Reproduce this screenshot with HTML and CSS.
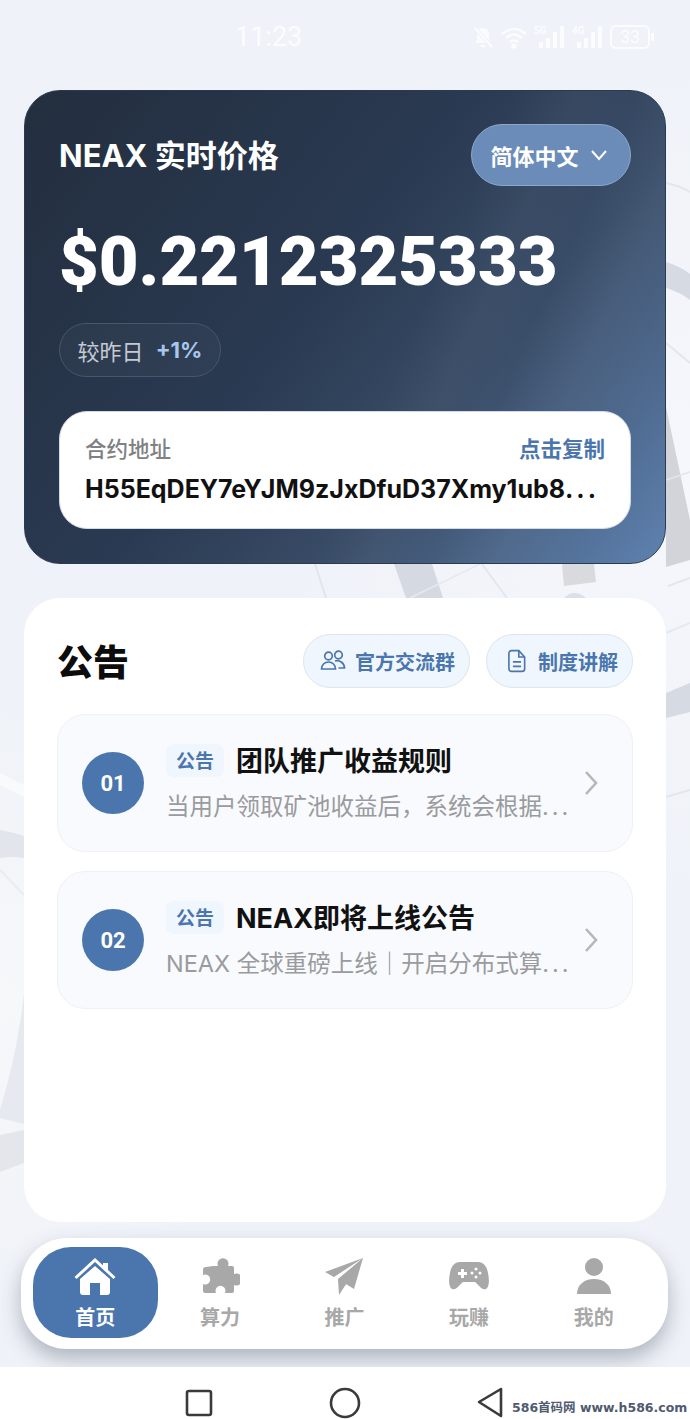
FILE: index.html

```html
<!DOCTYPE html>
<html lang="zh-CN">
<head>
    <meta charset="UTF-8">
    <title>NEAX</title>
    <link rel="stylesheet" href="styles.css">
</head>
<body>
    <div class="screen">
        <!-- faint shapes behind the cards -->
        <svg class="backdrop" width="690" height="1367" viewBox="0 0 690 1367">
            <path d="M666 183 Q680 186 690 192" fill="none" stroke="#e3e6ee" stroke-width="2"/>
            <path d="M666 262 Q680 266 690 274 L690 300 Q680 292 666 288 Z" fill="#d5dae3"/>
            <path d="M666 343 L690 363" fill="none" stroke="#e3e6ee" stroke-width="2"/>
            <path d="M666 407 L690 520 L690 560 L666 567 Z" fill="#d2d4d9"/>
            <path d="M666 480 L690 472" fill="none" stroke="#e3e5ea" stroke-width="1.5"/>
            <path d="M315 564 L326 598" fill="none" stroke="#e2e5ec" stroke-width="2"/>
            <path d="M394 564 L432 564 L443 598 L406 598 Z" fill="#d5dae2"/>
            <path d="M410 598 L480 564" fill="none" stroke="#e6e9ef" stroke-width="1.5"/>
            <path d="M482 564 L507 598" fill="none" stroke="#e3e6ec" stroke-width="2"/>
            <path d="M562 564 L594 564 L596 582 L564 586 Z" fill="#d8dade"/>
            <path d="M564 598 Q574 588 586 598 Z" fill="#dcdfe6"/>
            <path d="M668 586 L690 578" fill="none" stroke="#e3e6ee" stroke-width="2"/>
            <path d="M666 633 L690 623" fill="none" stroke="#e7e9f0" stroke-width="2"/>
            <path d="M666 693 L690 683 L690 712 L666 718 Z" fill="#d5dae3"/>
            <path d="M666 797 L690 790" fill="none" stroke="#e3e6ee" stroke-width="2"/>
            <path d="M0 773 L24 785 L24 797 L0 785 Z" fill="#f9fafb"/>
            <path d="M0 830 Q12 832 24 836 L24 858 Q12 856 0 858 Z" fill="#e2e5ec"/>
            <path d="M0 870 L24 895" fill="none" stroke="#e9ecf3" stroke-width="2"/>
            <path d="M24 993 Q18 1050 0 1110 L0 1118 L24 1124 Z" fill="#e6e9ef"/>
            <path d="M0 1135 L24 1130 L24 1163 L0 1172 Z" fill="#e4e6ec"/>
        </svg>

        <div class="status-bar">
            <span class="clock">11:23</span>
            <div class="status-icons">
                <svg width="22" height="24" viewBox="0 0 22 24"><path d="M11 3c-4 0-6 3-6 7v5l-2 3h16l-2-3v-5c0-4-2-7-6-7zM8 20h6l-3 3z" fill="#fbfcfe"/><path d="M2 2l18 20" stroke="#eff2f8" stroke-width="4"/><path d="M3 3l17 19" stroke="#fbfcfe" stroke-width="2"/></svg>
                <svg width="28" height="24" viewBox="0 0 28 24" fill="none" stroke="#fbfcfe" stroke-width="2.4"><path d="M2 9q12-10 24 0M6 13q8-7 16 0M10 17q4-3 8 0"/><circle cx="14" cy="21" r="1.6" fill="#fbfcfe"/></svg>
                <svg width="32" height="24" viewBox="0 0 32 24" fill="#fbfcfe"><text x="0" y="9" class="net-label">5G</text><rect x="5" y="17" width="4" height="6"/><rect x="12" y="13" width="4" height="10"/><rect x="19" y="7" width="4" height="16"/><rect x="26" y="1" width="4" height="22"/></svg>
                <svg width="32" height="24" viewBox="0 0 32 24" fill="#fbfcfe"><text x="0" y="9" class="net-label">4G</text><rect x="5" y="17" width="4" height="6"/><rect x="12" y="13" width="4" height="10"/><rect x="19" y="7" width="4" height="16"/><rect x="26" y="1" width="4" height="22"/></svg>
                <span class="battery">33</span>
            </div>
        </div>

        <section class="hero">
            <div class="hero-top">
                <h1 class="hero-title">NEAX 实时价格</h1>
                <button class="lang-pill">简体中文
                    <svg width="18" height="12" viewBox="0 0 18 12" fill="none" stroke="#fff" stroke-width="2"><path d="M2 2l7 8 7-8"/></svg>
                </button>
            </div>
            <div class="price">$0.2212325333</div>
            <div class="change-pill">较昨日 <b>+1%</b></div>
            <div class="address-box">
                <div class="address-head">
                    <span class="address-label">合约地址</span>
                    <span class="address-copy">点击复制</span>
                </div>
                <div class="address-value">H55EqDEY7eYJM9zJxDfuD37Xmy1ub8<span class="dots">...</span></div>
            </div>
        </section>

        <section class="notices">
            <div class="notices-head">
                <h2>公告</h2>
                <div class="head-actions">
                    <button class="action-btn">
                        <svg width="26" height="22" viewBox="0 0 26 22" fill="none" stroke="#4a76ad" stroke-width="1.7"><circle cx="8.5" cy="6" r="3.8"/><circle cx="18.5" cy="5" r="3.8"/><path d="M1.5 19c0-4 3-7 7-7s7 3 7 7z"/><path d="M15 11c4-1.5 9.5 2 9.5 7h-6"/></svg>
                        官方交流群
                    </button>
                    <button class="action-btn action-doc">
                        <svg width="18" height="24" viewBox="0 0 20 26" fill="none" stroke="#4a76ad" stroke-width="1.8"><path d="M4 1.5h8l6.5 7v13a3 3 0 0 1-3 3H4a3 3 0 0 1-3-3v-17a3 3 0 0 1 3-3z"/><path d="M12 1.5v7h6.5M5.5 14h9M5.5 19h9"/></svg>
                        制度讲解
                    </button>
                </div>
            </div>

            <div class="notice-item">
                <div class="notice-num">01</div>
                <div class="notice-body">
                    <div class="notice-title-row">
                        <span class="notice-tag">公告</span>
                        <span class="notice-title">团队推广收益规则</span>
                    </div>
                    <div class="notice-sub">当用户领取矿池收益后，系统会根据<span class="dots">...</span></div>
                </div>
                <svg class="chevron" width="14" height="26" viewBox="0 0 14 26" fill="none" stroke="#b5b7bc" stroke-width="2.6"><path d="M2 2l10 11L2 24"/></svg>
            </div>

            <div class="notice-item">
                <div class="notice-num">02</div>
                <div class="notice-body">
                    <div class="notice-title-row">
                        <span class="notice-tag">公告</span>
                        <span class="notice-title">NEAX即将上线公告</span>
                    </div>
                    <div class="notice-sub">NEAX 全球重磅上线｜开启分布式算<span class="dots">...</span></div>
                </div>
                <svg class="chevron" width="14" height="26" viewBox="0 0 14 26" fill="none" stroke="#b5b7bc" stroke-width="2.6"><path d="M2 2l10 11L2 24"/></svg>
            </div>
        </section>

        <nav class="tab-bar">
            <a class="tab tab-active">
                <svg width="42" height="40" viewBox="0 0 42 40" fill="#fff"><path d="M29 6h5v8l-5-4z"/><path d="M1.5 21L21 3l19.5 18" fill="none" stroke="#fff" stroke-width="3"/><path d="M21 9L6 22v13a3 3 0 0 0 3 3h7V26h10v12h7a3 3 0 0 0 3-3V22z"/></svg>
                <span>首页</span>
            </a>
            <a class="tab">
                <svg width="40" height="40" viewBox="0 0 40 40" fill="#a8a8a8"><path d="M13 9h5a5.5 5.5 0 1 1 10 0h4a2 2 0 0 1 2 2v6a6 6 0 1 1 0 11v6a2 2 0 0 1-2 2h-7a5 5 0 1 0-9 0H5a2 2 0 0 1-2-2v-7a5 5 0 1 0 0-9v-5a3 3 0 0 1 3-3z"/></svg>
                <span>算力</span>
            </a>
            <a class="tab">
                <svg width="40" height="40" viewBox="0 0 40 40" fill="#a8a8a8"><path d="M39 1L1 15l9 5z"/><path d="M39 1L14 22l1 16z"/><path d="M39 1L17 24l13 8z"/></svg>
                <span>推广</span>
            </a>
            <a class="tab">
                <svg width="42" height="36" viewBox="0 0 42 36" fill="#a8a8a8"><path d="M12 3h18c6 0 9 5 10 11 1 5 2 14-2 16-4 2-8-5-11-7H15c-3 2-7 9-11 7-4-2-3-11-2-16C3 8 6 3 12 3z"/><path d="M10 13h3v-3h3v3h3v3h-3v3h-3v-3h-3z" fill="#fff"/><g fill="#fff"><circle cx="28" cy="10" r="1.5"/><circle cx="28" cy="18" r="1.5"/><circle cx="24" cy="14" r="1.5"/><circle cx="32" cy="14" r="1.5"/></g></svg>
                <span>玩赚</span>
            </a>
            <a class="tab">
                <svg width="36" height="40" viewBox="0 0 36 40" fill="#a8a8a8"><circle cx="18" cy="10" r="9"/><path d="M1 37c0-9 7-15 17-15s17 6 17 15z"/></svg>
                <span>我的</span>
            </a>
        </nav>

        <div class="system-bar">
            <svg width="28" height="28" viewBox="0 0 28 28" fill="none" stroke="#3a3a3d" stroke-width="2.6"><rect x="2" y="2" width="24" height="24" rx="2"/></svg>
            <svg width="32" height="32" viewBox="0 0 32 32" fill="none" stroke="#3a3a3d" stroke-width="2.6"><circle cx="16" cy="16" r="14"/></svg>
            <svg width="28" height="32" viewBox="0 0 28 32" fill="none" stroke="#3a3a3d" stroke-width="2.6" stroke-linejoin="round"><path d="M25 2v27L3 15z"/></svg>
            <span class="watermark">586首码网 www.h586.com</span>
        </div>
    </div>
</body>
</html>
```

FILE: styles.css

```css
* {
    box-sizing: border-box;
}

html, body {
    margin: 0;
    background: #eff2f8;
}

body {
    font-family: "Roboto", "Noto Sans CJK SC", sans-serif;
    color: #111;
}

button {
    font-family: inherit;
}

.screen {
    position: relative;
    width: 690px;
    height: 1419px;
    overflow: hidden;
    background:
        radial-gradient(circle 420px at 690px 480px, #f6f7fc, rgba(246, 247, 252, 0)),
        radial-gradient(circle 300px at 0 1000px, #f7f8fa, rgba(247, 248, 250, 0)),
        #eff2f8;
}

.backdrop {
    position: absolute;
    left: 0;
    top: 0;
}

.status-bar {
    position: relative;
    height: 90px;
    padding: 22px 40px 0 235px;
    display: flex;
    align-items: flex-start;
    justify-content: space-between;
    color: #fbfcfe;
}

.clock {
    font-size: 27px;
    line-height: 30px;
}

.status-icons {
    display: flex;
    align-items: center;
    gap: 6px;
    height: 30px;
}

.net-label {
    font-size: 10px;
    font-weight: 700;
}

.battery {
    position: relative;
    width: 40px;
    height: 24px;
    border: 2px solid #fbfcfe;
    border-radius: 6px;
    font-size: 18px;
    line-height: 20px;
    text-align: center;
}

.battery::after {
    content: "";
    position: absolute;
    right: -6px;
    top: 6px;
    width: 3px;
    height: 8px;
    background: #fbfcfe;
}

.hero {
    position: relative;
    margin: 0 24px;
    height: 474px;
    padding: 33px 34px 0;
    border: 1px solid #2a3a50;
    border-radius: 36px;
    color: #fff;
    background:
        linear-gradient(114deg, rgba(255,255,255,0) 58%, rgba(255,255,255,0.03) 65%, rgba(255,255,255,0) 72%, rgba(255,255,255,0.03) 80%, rgba(255,255,255,0) 90%),
        linear-gradient(128deg, #232e3e 0%, #2a3a52 45%, #3a4d68 68%, #5f82b0 100%);
}

.hero-top {
    display: flex;
    align-items: center;
    justify-content: space-between;
}

.hero-title {
    margin: 0 0 3px;
    font-family: "Inter", "Noto Sans CJK SC", sans-serif;
    font-size: 31px;
    font-weight: 700;
}

.lang-pill {
    width: 160px;
    height: 62px;
    display: flex;
    align-items: center;
    justify-content: center;
    gap: 11px;
    padding: 0 4px 0 0;
    border: 1.5px solid #8ba7cb;
    border-radius: 31px;
    background: #6b8cb8;
    color: #fff;
    font-size: 22px;
    font-weight: 700;
}

.price {
    margin-top: 36px;
    font-size: 68.7px;
    line-height: 80px;
    font-weight: 900;
}

.change-pill {
    margin-top: 21px;
    width: 162px;
    height: 54px;
    display: flex;
    align-items: center;
    justify-content: center;
    gap: 12px;
    border: 1px solid #46566b;
    border-radius: 27px;
    background: rgba(255, 255, 255, 0.03);
    color: #c4cad3;
    font-size: 22px;
}

.change-pill b {
    font-family: "Inter", sans-serif;
    color: #a9c6ee;
    font-weight: 700;
}

.address-box {
    margin-top: 34px;
    height: 118px;
    padding: 22px 25px 0;
    border: 1.5px solid #cfdbe9;
    border-radius: 28px;
    background: #fff;
    color: #111;
}

.address-head {
    display: flex;
    justify-content: space-between;
    font-size: 21.5px;
    line-height: 32px;
}

.address-label {
    color: #808184;
    font-weight: 500;
}

.address-copy {
    color: #4a76ad;
    font-weight: 700;
}

.address-value {
    margin-top: 6px;
    font-family: "Inter", sans-serif;
    font-size: 25px;
    line-height: 34px;
    font-weight: 700;
    white-space: nowrap;
}

.dots {
    letter-spacing: 3px;
}

.notices {
    position: relative;
    margin: 34px 24px 0;
    height: 624px;
    padding: 36px 33px 0;
    border-radius: 36px;
    background: #fff;
}

.notices-head {
    display: flex;
    align-items: center;
    justify-content: space-between;
    height: 54px;
    margin-bottom: 26px;
}

.notices-head h2 {
    margin: 0 0 3px;
    font-size: 36px;
    font-weight: 900;
    color: #0c0c0c;
}

.head-actions {
    display: flex;
    gap: 16px;
}

.action-btn {
    height: 54px;
    display: flex;
    align-items: center;
    gap: 9px;
    padding: 0 14px 0 16px;
    border: 1.5px solid #dde5f0;
    border-radius: 27px;
    background: #f0f6fd;
    color: #4a76ad;
    font-size: 20px;
    font-weight: 700;
}

.action-doc {
    gap: 12px;
    padding-left: 21px;
}

.notice-item {
    display: flex;
    align-items: center;
    height: 138px;
    margin-bottom: 19px;
    padding: 0 34px 0 24px;
    border: 1.5px solid #eef1f6;
    border-radius: 28px;
    background: #f8fafd;
}

.notice-num {
    flex: none;
    width: 62px;
    height: 62px;
    border-radius: 50%;
    background: #4a76ad;
    color: #fff;
    font-size: 22px;
    font-weight: 700;
    line-height: 63px;
    text-align: center;
}

.notice-body {
    flex: 1;
    min-width: 0;
    margin-left: 22px;
    margin-right: 14px;
}

.notice-title-row {
    display: flex;
    align-items: center;
    gap: 12px;
    height: 34px;
}

.notice-tag {
    width: 58px;
    height: 33px;
    border-radius: 8px;
    background: #f0f6fd;
    color: #4a76ad;
    font-size: 19px;
    font-weight: 700;
    line-height: 35px;
    text-align: center;
}

.notice-title {
    padding-top: 3px;
    font-family: "Inter", "Noto Sans CJK SC", sans-serif;
    font-size: 27px;
    font-weight: 700;
    line-height: 34px;
    color: #111;
}

.notice-sub {
    margin-top: 14px;
    font-family: "Inter", "Noto Sans CJK SC", sans-serif;
    font-size: 23.5px;
    line-height: 32px;
    color: #9a9b9e;
    white-space: nowrap;
}

.chevron {
    flex: none;
}

.tab-bar {
    position: relative;
    margin: 16px 0 0 21px;
    width: 647px;
    height: 111px;
    display: flex;
    padding: 9px 12px 11px;
    border-radius: 46px;
    background: #fff;
    box-shadow: 0 10px 20px rgba(60, 70, 90, 0.35);
}

.tab {
    flex: 1;
    display: flex;
    flex-direction: column;
    align-items: center;
    gap: 6px;
    padding-top: 10px;
    border-radius: 38px;
    color: #a8a8a8;
    font-size: 20px;
    font-weight: 700;
    line-height: 30px;
}

.tab svg {
    height: 40px;
}

.tab-active {
    background: #4a76ad;
    color: #fff;
}

.system-bar {
    position: relative;
    margin-top: 18px;
    height: 52px;
    display: flex;
    align-items: center;
    gap: 115.5px;
    padding: 20px 0 0 185px;
    background: #fff;
}

.watermark {
    position: absolute;
    left: 512px;
    top: 30px;
    font-family: "DejaVu Sans", "Noto Sans CJK SC", sans-serif;
    font-size: 12.5px;
    font-weight: 700;
    color: #4f5b70;
    white-space: nowrap;
}
```
